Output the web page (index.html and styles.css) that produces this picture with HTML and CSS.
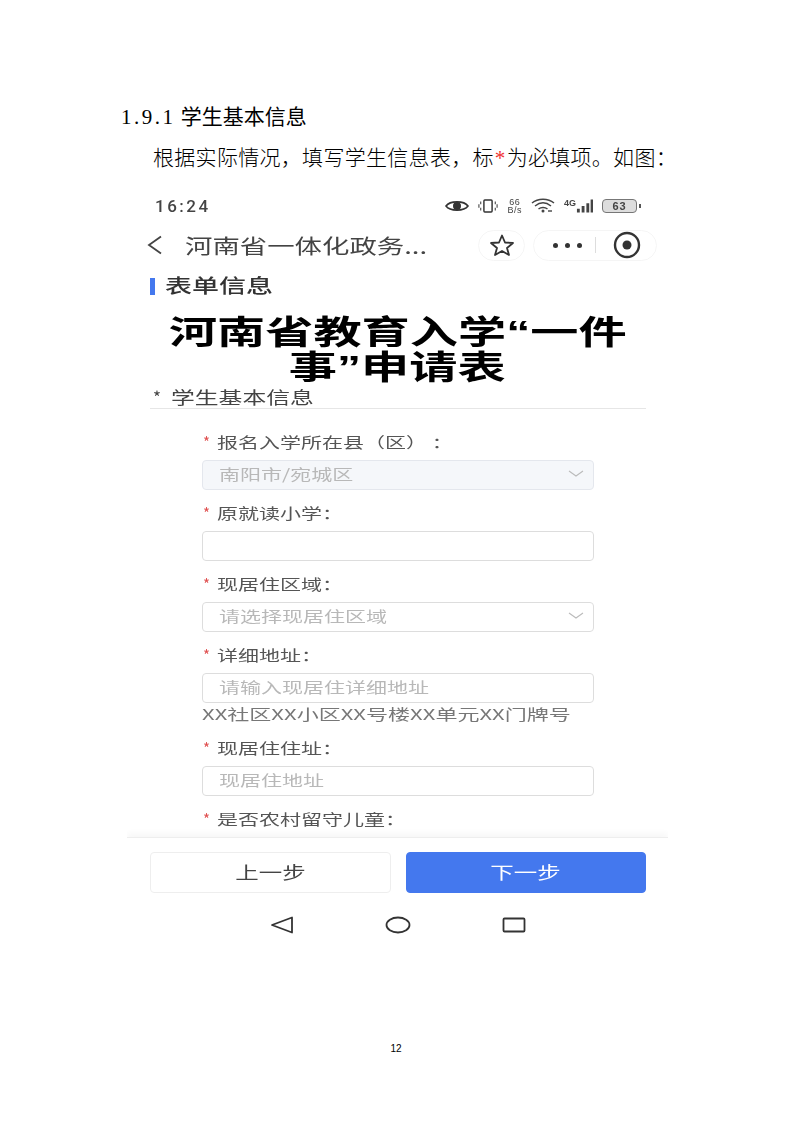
FILE: index.html
```html
<!DOCTYPE html>
<html lang="zh-CN">
<head>
    <meta charset="UTF-8">
    <meta name="viewport" content="width=device-width, initial-scale=1.0">
    <title>1.9.1 学生基本信息</title>
    <link rel="stylesheet" href="styles.css">
</head>
<body>
<div class="page">
    <h3 class="heading"><span class="heading-num">1.9.1</span> 学生基本信息</h3>
    <p class="intro">根据实际情况，填写学生信息表，标<span class="req-star">*</span>为必填项。如图：</p>

    <div class="phone">
        <div class="status-bar">
            <span class="clock">16:24</span>
            <div class="status-icons">
                <svg width="24" height="14" viewBox="0 0 24 14"><path d="M1 7C5 1.500 19 1.500 23 7C19 12.500 5 12.500 1 7Z" fill="none" stroke="#333" stroke-width="1.600"/><circle cx="12" cy="7" r="4" fill="#333"/></svg>
                <svg width="20" height="16" viewBox="0 0 22 16"><rect x="6.500" y="1.500" width="9" height="13" rx="1" fill="none" stroke="#333" stroke-width="1.600"/><path d="M3 3v3M1 6v4M3 10v3M19 3v3M21 6v4M19 10v3" stroke="#444" stroke-width="1.200"/></svg>
                <span class="speed">66<br>B/s</span>
                <svg width="24" height="15" viewBox="0 0 24 15"><path d="M1 5C7 0 17 0 23 5M4 8C9 4 15 4 20 8M7.500 11C10 9 14 9 16.500 11" fill="none" stroke="#444" stroke-width="1.500"/><circle cx="12" cy="13" r="1.500" fill="#444"/><path d="M17 13h4" stroke="#444" stroke-width="1.400"/></svg>
                <div class="signal">
                    <span class="net">4G</span>
                    <svg width="17" height="14" viewBox="0 0 18 14"><path d="M1 10h3v4H1zM6 7h3v7H6zM11 4h3v10h-3zM15.500 0h2.500v14h-2.500z" fill="#444"/></svg>
                </div>
                <div class="battery"><span>63</span></div>
                <span class="battery-tip"></span>
            </div>
        </div>

        <div class="nav-bar">
            <svg class="back" width="16" height="20" viewBox="0 0 16 20"><path d="M14 1.500L2 10L14 18.500" fill="none" stroke="#444" stroke-width="1.800"/></svg>
            <div class="nav-title"><span class="wide">河南省一体化政务...</span></div>
            <div class="star-btn">
                <svg width="26" height="24" viewBox="0 0 26 24"><path d="M13 2.500L16 9.500L24 10L18 15L20 22L13 18L6 22L8 15L2 10L10 9.500Z" fill="none" stroke="#333" stroke-width="1.800" stroke-linejoin="round"/></svg>
            </div>
            <div class="capsule">
                <span class="dots"><i></i><i></i><i></i></span>
                <span class="capsule-sep"></span>
                <svg width="28" height="28" viewBox="0 0 28 28"><circle cx="14" cy="14" r="12" fill="none" stroke="#333" stroke-width="2.400"/><circle cx="14" cy="14" r="4.500" fill="#333"/></svg>
            </div>
        </div>

        <div class="section-title"><span class="section-mark"></span><span class="wide">表单信息</span></div>

        <h1 class="form-title"><span class="wide">河南省教育入学“一件</span><br><span class="wide">事”申请表</span></h1>

        <div class="group-title"><b>*</b><span class="wide">学生基本信息</span></div>

        <div class="form">
            <div class="field">
                <div class="label"><b>*</b><span class="wide">报名入学所在县（区） ：</span></div>
                <div class="input disabled"><span class="wide">南阳市/宛城区</span><svg class="caret" width="16" height="7" viewBox="0 0 16 7"><path d="M1 1L8 6L15 1" fill="none" stroke="#bbb" stroke-width="1.100"/></svg></div>
            </div>
            <div class="field">
                <div class="label"><b>*</b><span class="wide">原就读小学：</span></div>
                <div class="input"></div>
            </div>
            <div class="field">
                <div class="label"><b>*</b><span class="wide">现居住区域：</span></div>
                <div class="input"><span class="wide">请选择现居住区域</span><svg class="caret" width="16" height="7" viewBox="0 0 16 7"><path d="M1 1L8 6L15 1" fill="none" stroke="#bbb" stroke-width="1.100"/></svg></div>
            </div>
            <div class="field">
                <div class="label"><b>*</b><span class="wide">详细地址：</span></div>
                <div class="input"><span class="wide">请输入现居住详细地址</span></div>
                <div class="hint"><span class="wide">XX社区XX小区XX号楼XX单元XX门牌号</span></div>
            </div>
            <div class="field">
                <div class="label"><b>*</b><span class="wide">现居住住址：</span></div>
                <div class="input"><span class="wide">现居住地址</span></div>
            </div>
            <div class="field">
                <div class="label"><b>*</b><span class="wide">是否农村留守儿童：</span></div>
            </div>
        </div>

        <div class="footer">
            <button class="btn"><span class="wide">上一步</span></button>
            <button class="btn primary"><span class="wide">下一步</span></button>
        </div>

        <div class="sys-nav">
            <svg width="24" height="18" viewBox="0 0 24 18"><path d="M22 1.500V16.500L2 9Z" fill="none" stroke="#333" stroke-width="1.800" stroke-linejoin="round"/></svg>
            <svg width="26" height="18" viewBox="0 0 26 18"><ellipse cx="13" cy="9" rx="11.500" ry="7.500" fill="none" stroke="#333" stroke-width="1.800"/></svg>
            <svg width="24" height="16" viewBox="0 0 24 16"><rect x="1.500" y="1.500" width="21" height="13" rx="1" fill="none" stroke="#333" stroke-width="1.800"/></svg>
        </div>
    </div>

    <div class="page-num">12</div>
</div>
</body>
</html>
```

FILE: styles.css
```css
body {
    margin: 0;
    background-color: #fff;
    font-family: "Liberation Serif", "Noto Sans CJK SC", serif;
}
.page {
    width: 794px;
    height: 1123px;
    overflow: hidden;
    padding-top: 103px;
    box-sizing: border-box;
}
.heading {
    margin: 0 0 0 121px;
    font-size: 21px;
    line-height: 28px;
    font-weight: 400;
    color: #000;
}
.heading-num {
    letter-spacing: 2.500px;
}
.intro {
    margin: 13px 0 0 153px;
    font-size: 21px;
    line-height: 28px;
    font-weight: 300;
    letter-spacing: 0.300px;
    color: #000;
    white-space: nowrap;
}
.req-star {
    margin: 0 1px;
    color: #f03030;
}
.phone {
    margin: 19px 0 0 127px;
    width: 541px;
    height: 755px;
    display: flex;
    flex-direction: column;
    font-family: "Noto Sans CJK SC", "Noto Sans", sans-serif;
    filter: blur(0.4px);
}
/* the screenshot is stretched sideways, so the phone's text is too */
.wide {
    display: inline-block;
    white-space: pre;
    transform-origin: left center;
    transform: scaleX(1.4);
}
.status-bar {
    height: 29px;
    padding: 0 27px 0 28px;
    display: flex;
    justify-content: space-between;
    align-items: center;
}
.clock {
    font-family: "Roboto", sans-serif;
    font-size: 17px;
    font-weight: 500;
    letter-spacing: 2.500px;
    color: #444;
}
.status-icons {
    display: flex;
    align-items: center;
    gap: 9px;
}
.speed {
    font-family: "Liberation Sans", sans-serif;
    font-size: 9px;
    line-height: 8px;
    letter-spacing: 0.500px;
    text-align: center;
    color: #444;
}
.signal {
    display: flex;
    align-items: flex-start;
}
.net {
    font-family: "Liberation Sans", sans-serif;
    font-size: 9px;
    line-height: 8px;
    font-weight: bold;
    color: #444;
}
.battery {
    width: 33px;
    height: 12px;
    border: 1.500px solid #777;
    border-radius: 4px;
    background-color: #ddd;
    text-align: center;
    font-family: "Liberation Sans", sans-serif;
    font-size: 11px;
    line-height: 12px;
    font-weight: bold;
    letter-spacing: 1px;
    color: #444;
}
.battery-tip {
    width: 2px;
    height: 4px;
    margin-left: -7px;
    background-color: #555;
}
.nav-bar {
    margin-top: 9px;
    height: 32px;
    display: flex;
    align-items: center;
    padding-left: 20px;
}
.back {
    margin-right: 22px;
}
.nav-title {
    width: 293px;
    font-size: 20px;
    color: #444;
}
.nav-title .wide {
    transform: scaleX(1.37);
}
.star-btn {
    width: 47px;
    height: 31px;
    box-sizing: border-box;
    display: flex;
    align-items: center;
    justify-content: center;
    border: 1px solid #f5f5f5;
    border-radius: 16px;
}
.capsule {
    width: 124px;
    height: 31px;
    margin-left: 8px;
    box-sizing: border-box;
    display: flex;
    align-items: center;
    border: 1px solid #f5f5f5;
    border-radius: 16px;
    padding-left: 19px;
}
.dots {
    display: flex;
    gap: 7px;
}
.dots i {
    width: 5px;
    height: 5px;
    border-radius: 50%;
    background-color: #333;
}
.capsule-sep {
    width: 1px;
    height: 16px;
    margin: 0 17px 0 13px;
    background-color: #ddd;
}
.section-title {
    margin: 15px 0 1px 23px;
    height: 18px;
    display: flex;
    align-items: center;
    gap: 10px;
    font-size: 19px;
    line-height: 18px;
    font-weight: 500;
    color: #333;
}
.section-title .wide {
    transform: scaleX(1.42);
}
.section-mark {
    width: 5px;
    height: 17px;
    margin-top: 2px;
    background-color: #4478ee;
}
.form-title {
    margin: 20px 0 0;
    font-family: "Liberation Sans", "Noto Sans CJK SC", sans-serif;
    font-size: 33px;
    line-height: 35px;
    font-weight: 700;
    color: #000;
    text-align: center;
}
.form-title .wide {
    transform-origin: center;
    transform: scaleX(1.46);
}
.group-title {
    margin: 0 0 0 23px;
    width: 496px;
    height: 24px;
    box-sizing: border-box;
    border-bottom: 1px solid #e6e6e6;
    font-size: 17px;
    line-height: 23px;
    color: #444;
}
.group-title b {
    display: inline-block;
    width: 21px;
    padding-left: 3px;
    box-sizing: border-box;
    font-weight: normal;
}
.form {
    margin: 23px 0 0 75px;
    width: 392px;
    height: 405px;
    display: flex;
    flex-direction: column;
    gap: 13px;
}
.label {
    height: 20px;
    margin-bottom: 8px;
    font-size: 15px;
    line-height: 20px;
    color: #555;
}
.label b {
    display: inline-block;
    width: 15px;
    padding-left: 1px;
    box-sizing: border-box;
    font-weight: normal;
    color: #e05050;
}
.input {
    height: 30px;
    box-sizing: border-box;
    display: flex;
    align-items: center;
    justify-content: space-between;
    padding: 0 9px 3px 16px;
    border: 1px solid #ddd;
    border-radius: 4px;
    font-size: 15px;
    line-height: 20px;
    color: #b8b8b8;
}
.input.disabled {
    background-color: #f5f7fa;
    border-color: #e4e7ed;
}
.hint {
    margin: 2px 0;
    font-size: 15px;
    line-height: 18px;
    color: #777;
}
.hint .wide {
    transform: scaleX(1.47);
}
.footer {
    height: 66px;
    box-sizing: border-box;
    padding: 14px 22px 0 23px;
    display: flex;
    gap: 15px;
    border-top: 1px solid #eee;
    box-shadow: 0 -4px 6px rgba(0, 0, 0, 0.03);
    clip-path: inset(-10px 0 0 0);
}
.btn {
    flex: 1;
    height: 41px;
    padding: 0 0 2px;
    border: 1px solid #eee;
    border-radius: 4px;
    background-color: #fff;
    font-family: inherit;
    font-size: 17px;
    color: #444;
}
.btn .wide {
    transform-origin: center;
    transform: scaleX(1.38);
}
.btn.primary {
    background-color: #4478ee;
    border-color: #4478ee;
    color: #fff;
}
.sys-nav {
    margin-top: 13px;
    height: 18px;
    padding-left: 143px;
    display: flex;
    align-items: center;
    gap: 91px;
}
.page-num {
    margin-top: 97px;
    padding-right: 2px;
    text-align: center;
    font-family: "Liberation Sans", sans-serif;
    font-size: 10px;
    line-height: 12px;
    color: #000;
}
```
